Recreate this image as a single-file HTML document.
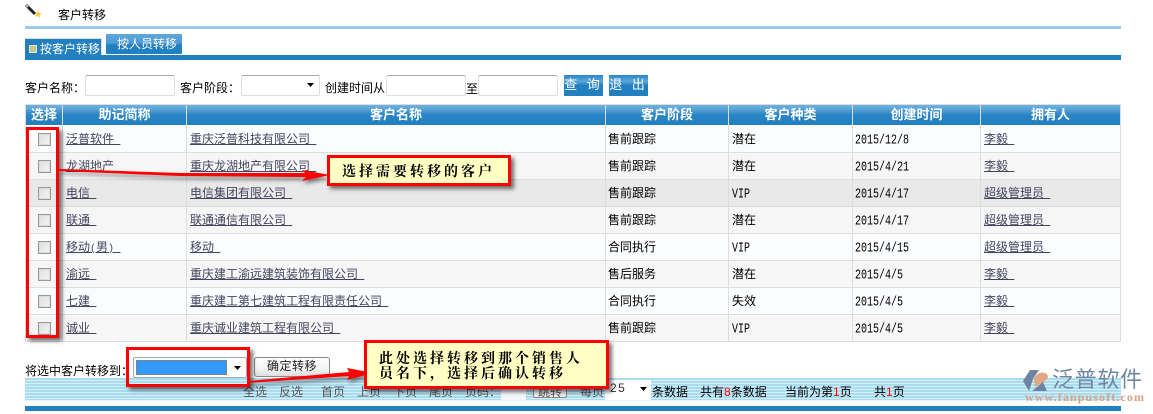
<!DOCTYPE html>
<html><head><meta charset="utf-8">
<style>
html,body{margin:0;padding:0;background:#fff}
body{width:1153px;height:414px;position:relative;overflow:hidden;font-family:"Liberation Sans","WenQuanYi Zen Hei","Noto Sans CJK SC",sans-serif;font-size:12px;color:#000}
.a{position:absolute;white-space:nowrap}
.t{line-height:14px;height:14px}
.in{position:absolute;box-sizing:border-box;background:#fff;border:1px solid #ddd;border-top-color:#aaa;border-radius:2px}
.btn{position:absolute;box-sizing:border-box;width:39px;height:21px;top:75px;background:linear-gradient(#2a86c6 0,#5ca6da 30%,#2280c0 50%,#2280c0 100%);color:#fff;text-align:center;line-height:20px;font-size:13px;letter-spacing:3px}
.th{position:absolute;top:105px;height:20px;line-height:19px;text-align:center;color:#fff;font-weight:bold;font-size:13px;background:linear-gradient(#6db0de 0,#5ba4d8 20%,#2a84c3 50%,#2280c0 100%)}
.row{position:absolute;left:25px;width:1096px;height:26px;border-bottom:1px solid #ddd}
.v{position:absolute;top:105px;width:1px;height:237px;background:#ddd}
.c{position:absolute;height:14px;line-height:14px;white-space:nowrap}
.d{font:10px/14px "Liberation Mono",monospace;transform:translateY(3px) scaleY(1.35)}
.m{font:10px "Liberation Mono",monospace}
.u{color:#44445f;text-decoration:underline;white-space:pre;word-spacing:3px}
.cb{position:absolute;left:38px;width:13px;height:13px;box-sizing:border-box;border:1px solid #999;background:linear-gradient(135deg,#ddd,#f6f6f6);box-shadow:inset 0 0 0 1px #dcdcdc}
.box{position:absolute;box-sizing:border-box;border:3px solid #f00;box-shadow:3px 3px 4px rgba(0,0,0,.55)}
.note{background:#ffffc4;font-weight:bold;font-family:"Liberation Serif","Noto Serif CJK SC",serif;color:#000}
.g{color:#555}
</style></head>
<body>
<!-- top -->
<svg class="a" style="left:24px;top:2px" width="20" height="18" viewBox="0 0 20 18"><path d="M2 3 L11 12" stroke="#222" stroke-width="3"/><path d="M1.500 2.500 L4 5" stroke="#bbb" stroke-width="2"/><path d="M14 8 L15 11 L18 11 L15.500 13 L16 16 L13.500 14 L11 15 L12 12.500 Z" fill="#f5c842"/></svg>
<div class="a t" style="left:58px;top:8px">客户转移</div>
<div class="a" style="left:25px;top:26px;width:1096px;height:3px;background:#9cc9ee"></div>
<!-- tabs -->
<div class="a" style="left:25px;top:38px;width:77px;height:18px;background:#2280c0;border:1px solid #ddd;border-width:1px 1px 0 0;box-sizing:border-box"></div>
<div class="a" style="left:29px;top:45px;width:8px;height:8px;background:#c4c98e;border:1px solid #e6e6c0;box-sizing:border-box"></div>
<div class="a t" style="left:40px;top:42px;color:#fff">按客户转移</div>
<div class="a" style="left:106px;top:34px;width:76px;height:20px;background:linear-gradient(#5fa8dc,#4c9bd4 45%,#2280c0 55%,#2280c0)"></div>
<div class="a t" style="left:117px;top:37px;color:#fff">按人员转移</div>
<div class="a" style="left:25px;top:55px;width:1096px;height:5px;background:#2280c0"></div>
<!-- search -->
<div class="a t" style="left:25px;top:81px">客户名称<span style="letter-spacing:0">：</span></div>
<div class="in" style="left:85px;top:75px;width:90px;height:21px"></div>
<div class="a t" style="left:180px;top:81px">客户阶段：</div>
<div class="in" style="left:241px;top:75px;width:79px;height:21px"></div>
<svg class="a" style="left:307px;top:83px" width="9" height="5"><path d="M0 0H7L3.500 4Z" fill="#000"/></svg>
<div class="a t" style="left:325px;top:81px">创建时间从</div>
<div class="in" style="left:386px;top:75px;width:80px;height:21px"></div>
<div class="a t" style="left:466px;top:82px">至</div>
<div class="in" style="left:478px;top:75px;width:80px;height:21px"></div>
<div class="btn" style="left:564px;">查 询</div>
<div class="btn" style="left:609px;">退 出</div>
<!-- table -->
<div class="a" style="left:25px;top:104px;width:1096px;height:1px;background:#ddd"></div>
<div class="th" style="left:26px;width:36px">选择</div>
<div class="th" style="left:63px;width:123px">助记简称</div>
<div class="th" style="left:187px;width:418px">客户名称</div>
<div class="th" style="left:606px;width:122px">客户阶段</div>
<div class="th" style="left:729px;width:123px">客户种类</div>
<div class="th" style="left:853px;width:127px">创建时间</div>
<div class="th" style="left:981px;width:139px">拥有人</div>

<div class="row" style="top:126px;background:#fbfcfe"></div>
<div class="row" style="top:153px;background:#f6f6f6"></div>
<div class="row" style="top:180px;background:#e9e9e9"></div>
<div class="row" style="top:207px;background:#f6f6f6"></div>
<div class="row" style="top:234px;background:#fbfcfe"></div>
<div class="row" style="top:261px;background:#f6f6f6"></div>
<div class="row" style="top:288px;background:#fbfcfe"></div>
<div class="row" style="top:315px;background:#f6f6f6"></div>
<div class="v" style="left:25px"></div><div class="v" style="left:62px"></div><div class="v" style="left:186px"></div><div class="v" style="left:605px"></div><div class="v" style="left:728px"></div><div class="v" style="left:852px"></div><div class="v" style="left:980px"></div><div class="v" style="left:1120px"></div>

<div class="cb" style="top:133px"></div><div class="cb" style="top:160px"></div><div class="cb" style="top:187px"></div><div class="cb" style="top:214px"></div><div class="cb" style="top:241px"></div><div class="cb" style="top:268px"></div><div class="cb" style="top:295px"></div><div class="cb" style="top:322px"></div>

<div class="c" style="left:66px;top:132px"><span class="u">泛普软件 </span></div><div class="c" style="left:190px;top:132px"><span class="u">重庆泛普科技有限公司 </span></div><div class="c" style="left:608px;top:132px">售前跟踪</div><div class="c" style="left:732px;top:132px">潜在</div><div class="c d" style="left:855px;top:132px">2015/12/8</div><div class="c" style="left:984px;top:132px"><span class="u">李毅 </span></div>
<div class="c" style="left:66px;top:159px"><span class="u">龙湖地产 </span></div><div class="c" style="left:190px;top:159px"><span class="u">重庆龙湖地产有限公司 </span></div><div class="c" style="left:608px;top:159px">售前跟踪</div><div class="c" style="left:732px;top:159px">潜在</div><div class="c d" style="left:855px;top:159px">2015/4/21</div><div class="c" style="left:984px;top:159px"><span class="u">李毅 </span></div>
<div class="c" style="left:66px;top:186px"><span class="u">电信 </span></div><div class="c" style="left:190px;top:186px"><span class="u">电信集团有限公司 </span></div><div class="c" style="left:608px;top:186px">售前跟踪</div><div class="c d" style="left:732px;top:186px">VIP</div><div class="c d" style="left:855px;top:186px">2015/4/17</div><div class="c" style="left:984px;top:186px"><span class="u">超级管理员 </span></div>
<div class="c" style="left:66px;top:213px"><span class="u">联通 </span></div><div class="c" style="left:190px;top:213px"><span class="u">联通通信有限公司 </span></div><div class="c" style="left:608px;top:213px">售前跟踪</div><div class="c" style="left:732px;top:213px">潜在</div><div class="c d" style="left:855px;top:213px">2015/4/17</div><div class="c" style="left:984px;top:213px"><span class="u">超级管理员 </span></div>
<div class="c" style="left:66px;top:240px"><span class="u">移动<span class="m">(</span>男<span class="m">)</span> </span></div><div class="c" style="left:190px;top:240px"><span class="u">移动 </span></div><div class="c" style="left:608px;top:240px">合同执行</div><div class="c d" style="left:732px;top:240px">VIP</div><div class="c d" style="left:855px;top:240px">2015/4/15</div><div class="c" style="left:984px;top:240px"><span class="u">超级管理员 </span></div>
<div class="c" style="left:66px;top:267px"><span class="u">渝远 </span></div><div class="c" style="left:190px;top:267px"><span class="u">重庆建工渝远建筑装饰有限公司 </span></div><div class="c" style="left:608px;top:267px">售后服务</div><div class="c" style="left:732px;top:267px">潜在</div><div class="c d" style="left:855px;top:267px">2015/4/5</div><div class="c" style="left:984px;top:267px"><span class="u">李毅 </span></div>
<div class="c" style="left:66px;top:294px"><span class="u">七建 </span></div><div class="c" style="left:190px;top:294px"><span class="u">重庆建工第七建筑工程有限责任公司 </span></div><div class="c" style="left:608px;top:294px">合同执行</div><div class="c" style="left:732px;top:294px">失效</div><div class="c d" style="left:855px;top:294px">2015/4/5</div><div class="c" style="left:984px;top:294px"><span class="u">李毅 </span></div>
<div class="c" style="left:66px;top:321px"><span class="u">诚业 </span></div><div class="c" style="left:190px;top:321px"><span class="u">重庆诚业建筑工程有限公司 </span></div><div class="c" style="left:608px;top:321px">售前跟踪</div><div class="c d" style="left:732px;top:321px">VIP</div><div class="c d" style="left:855px;top:321px">2015/4/5</div><div class="c" style="left:984px;top:321px"><span class="u">李毅 </span></div>

<!-- bottom pager -->
<div class="a" style="left:25px;top:378px;width:1096px;height:22px;background:repeating-linear-gradient(#aadcf0 0,#aadcf0 2px,#d6f0f8 2px,#d6f0f8 3px)"></div>
<div class="a" style="left:25px;top:400px;width:1096px;height:1px;background:#e4f4fa"></div>
<div class="a" style="left:25px;top:406px;width:1096px;height:5px;background:#2280c0"></div>
<div class="a t g" style="left:243px;top:385px">全选</div>
<div class="a t g" style="left:279px;top:385px">反选</div>
<div class="a t g" style="left:321px;top:385px">首页</div>
<div class="a t g" style="left:357px;top:385px">上页</div>
<div class="a t g" style="left:393px;top:385px">下页</div>
<div class="a t g" style="left:429px;top:385px">尾页</div>
<div class="a t g" style="left:465px;top:385px">页码：</div>
<div class="a" style="left:501px;top:387px;width:25px;height:13px;background:#f4f8fa"></div>
<div class="a" style="left:533px;top:386px;width:34px;height:12px;box-sizing:border-box;border:1px solid #888;border-radius:2px;background:#eee;text-align:center;line-height:10px;color:#555">跳转</div>
<div class="a t g" style="left:580px;top:385px">每页</div>
<div class="a" style="left:605px;top:380px;width:46px;height:20px;background:#fff"></div>
<div class="a t" style="left:610px;top:381px;color:#333;letter-spacing:1.500px">25</div>
<svg class="a" style="left:640px;top:387px" width="8" height="5"><path d="M0 0H7L3.500 4Z" fill="#000"/></svg>
<div class="a t" style="left:652px;top:385px">条数据</div>
<div class="a t" style="left:700px;top:385px">共有<span style="color:#f00">8</span>条数据</div>
<div class="a t" style="left:785px;top:385px">当前为第<span style="color:#f00">1</span>页</div>
<div class="a t" style="left:874px;top:385px">共<span style="color:#f00">1</span>页</div>

<!-- logo -->
<svg class="a" style="left:1022px;top:369px" width="30" height="24" viewBox="0 0 30 24"><path d="M1 12 L8 1 H17 L11 10 L7 22 Z" fill="#6f84a2"/><path d="M12 10 C15 2 24 2 26 7 C26 11 20 14 13 18 Z" fill="#e0a882"/><path d="M10 22 L21 13 L25 22 Z" fill="#6f84a2"/></svg>
<div class="a" style="left:1052px;top:368px;font-size:22px;line-height:24px;color:#7186a3;letter-spacing:.7px;font-family:'Liberation Sans','Noto Sans CJK SC',sans-serif">泛普软件</div>
<div class="a" style="left:1025px;top:391px;font-size:12px;line-height:13px;color:#d8a184;font-weight:bold;letter-spacing:1.100px;font-family:'Liberation Serif',serif">www.fanpusoft.com</div>

<!-- transfer row -->
<div class="a t" style="left:25px;top:364px">将选中客户转移到：</div>
<div class="a" style="left:133px;top:357px;width:114px;height:21px;box-sizing:border-box;border:1px solid #9ab;background:#fff;border-radius:2px"></div>
<div class="a" style="left:136px;top:360px;width:91px;height:15px;box-sizing:border-box;background:#3399ff;border:1px dotted #c07020"></div>
<svg class="a" style="left:234px;top:366px" width="9" height="5"><path d="M0 0H7L3.500 4Z" fill="#000"/></svg>
<div class="a" style="left:254px;top:357px;width:76px;height:20px;box-sizing:border-box;border:1px solid #888;border-radius:3px;background:linear-gradient(#fff,#f4f4f4 60%,#ddd);text-align:center;line-height:17px;letter-spacing:.5px;color:#222">确定转移</div>

<!-- annotations -->
<div class="box" style="left:26px;top:127px;width:33px;height:211px"></div>
<div class="box" style="left:126px;top:347px;width:124px;height:40px"></div>
<svg class="a" style="left:50px;top:160px;overflow:visible" width="300" height="30"><path d="M9 9 L130 13 L255 13 L252 10 L280 15 L252 21 L256 17 L130 16 L9 11 Z" fill="#f00" style="filter:drop-shadow(2px 3px 2px rgba(0,0,0,.5))"/></svg>
<div class="box note" style="left:327px;top:155px;width:184px;height:31px;font-size:14px;letter-spacing:3px;line-height:30px;padding-left:12px">选择需要转移的客户</div>
<svg class="a" style="left:245px;top:355px;overflow:visible" width="130" height="40"><path d="M3 26 L104 17 L102 13 L128 18 L102 25 L104 21 L3 28 Z" fill="#f00" style="filter:drop-shadow(2px 3px 2px rgba(0,0,0,.5))"/></svg>
<div class="box note" style="left:364px;top:340px;width:245px;height:49px;font-size:14px;letter-spacing:3px;line-height:15px;padding:9px 0 0 12px;white-space:normal">此处选择转移到那个销售人<br>员名下，选择后确认转移</div>
</body></html>
